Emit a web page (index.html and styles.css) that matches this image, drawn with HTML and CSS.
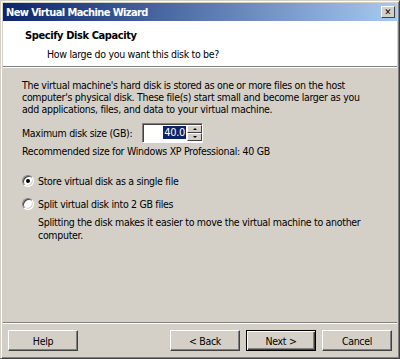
FILE: index.html
```html
<!DOCTYPE html>
<html>
<head>
    <meta charset="UTF-8">
    <title>New Virtual Machine Wizard</title>
    <link rel="stylesheet" href="styles.css">
</head>
<body>
    <div class="window">
        <div class="titlebar">
            <span class="title">New Virtual Machine Wizard</span>
            <span class="close">&#x2715;</span>
        </div>

        <div class="header">
            <div class="header-title">Specify Disk Capacity</div>
            <div class="header-sub">How large do you want this disk to be?</div>
        </div>

        <div class="content">
            <p class="intro">The virtual machine's hard disk is stored as one or more files on the host<br>
                computer's physical disk. These file(s) start small and become larger as you<br>
                add applications, files, and data to your virtual machine.</p>

            <div class="size-row">
                <span class="size-label">Maximum disk size (GB):</span>
                <div class="spin">
                    <div class="spin-field"><span class="sel">40.0</span></div>
                    <div class="spin-buttons">
                        <div class="spin-btn"><span class="arrow-up"></span></div>
                        <div class="spin-btn"><span class="arrow-down"></span></div>
                    </div>
                </div>
            </div>

            <p class="recommend">Recommended size for Windows XP Professional: 40 GB</p>

            <div class="radio-row first">
                <span class="radio checked"></span>
                <span>Store virtual disk as a single file</span>
            </div>
            <div class="radio-row">
                <span class="radio"></span>
                <span>Split virtual disk into 2 GB files</span>
            </div>
            <p class="split-note">Splitting the disk makes it easier to move the virtual machine to another<br>
                computer.</p>
        </div>

        <div class="footer">
            <button class="btn" type="button">Help</button>
            <div class="footer-right">
                <button class="btn" type="button">&lt; Back</button>
                <button class="btn default" type="button">Next &gt;</button>
                <button class="btn" type="button">Cancel</button>
            </div>
        </div>
    </div>
</body>
</html>
```

FILE: styles.css
```css
body {
    margin: 0;
    padding: 0;
    background-color: #d4d0c8;
    font-family: "DejaVu Sans Condensed", "Liberation Sans", sans-serif;
    font-size: 10.5px;
    letter-spacing: -0.3px;
    color: #000;
}

.window {
    width: 400px;
    height: 359px;
    box-sizing: border-box;
    background-color: #d4d0c8;
    border-top: 1px solid #d4d0c8;
    border-left: 1px solid #d4d0c8;
    border-right: 1px solid #404040;
    border-bottom: 1px solid #404040;
    box-shadow: inset 1px 1px 0 #fff, inset -1px -1px 0 #808080;
    padding: 2px;
    display: flex;
    flex-direction: column;
}

.titlebar {
    height: 18px;
    display: flex;
    align-items: center;
    justify-content: space-between;
    padding: 0 2px 0 3px;
    background: linear-gradient(to right, #0a246a, #a6caf0);
    flex-shrink: 0;
}

.title {
    color: #fff;
    font-weight: bold;
    font-size: 11px;
    letter-spacing: -0.6px;
}

.close {
    width: 14px;
    height: 12px;
    box-sizing: border-box;
    background-color: #d4d0c8;
    border-top: 1px solid #fff;
    border-left: 1px solid #fff;
    border-right: 1px solid #404040;
    border-bottom: 1px solid #404040;
    font-size: 9px;
    font-weight: bold;
    letter-spacing: 0;
    line-height: 10px;
    text-align: center;
}

.header {
    height: 46px;
    background-color: #fff;
    border-bottom: 1px solid #808080;
    box-shadow: 0 1px 0 #fff;
    padding: 8px 0 0 22px;
    box-sizing: border-box;
    flex-shrink: 0;
}

.header-title {
    font-weight: bold;
    font-size: 11px;
    letter-spacing: -0.4px;
    line-height: 14px;
}

.header-sub {
    margin-top: 5px;
    padding-left: 22px;
    line-height: 13px;
}

.content {
    flex: 1;
    padding: 12px 0 0 19px;
    white-space: nowrap;
}

p {
    margin: 0;
}

.intro {
    line-height: 12px;
}

.size-row {
    display: flex;
    align-items: center;
    margin-top: 8px;
}

.size-label {
    width: 120px;
}

.spin {
    display: flex;
    width: 61px;
    height: 20px;
    box-sizing: border-box;
    border-top: 1px solid #808080;
    border-left: 1px solid #808080;
    border-right: 1px solid #fff;
    border-bottom: 1px solid #fff;
    box-shadow: inset 1px 1px 0 #404040;
    background-color: #fff;
}

.spin-field {
    flex: 1;
    text-align: right;
    padding: 2px 1px 0 0;
    line-height: 14px;
    font-size: 11px;
}

.sel {
    background-color: #0a246a;
    color: #fff;
    padding: 0 1px;
}

.spin-buttons {
    width: 15px;
    display: flex;
    flex-direction: column;
    padding: 1px 0;
    box-sizing: border-box;
}

.spin-btn {
    flex: 1;
    background-color: #d4d0c8;
    border-top: 1px solid #fff;
    border-left: 1px solid #fff;
    border-right: 1px solid #404040;
    border-bottom: 1px solid #404040;
    display: flex;
    align-items: center;
    justify-content: center;
}

.arrow-up {
    width: 0;
    height: 0;
    border-left: 2px solid transparent;
    border-right: 2px solid transparent;
    border-bottom: 2px solid #000;
}

.arrow-down {
    width: 0;
    height: 0;
    border-left: 2px solid transparent;
    border-right: 2px solid transparent;
    border-top: 2px solid #000;
}

.recommend {
    margin-top: 2px;
    line-height: 13px;
}

.radio-row {
    display: flex;
    align-items: center;
    margin-top: 10px;
    height: 13px;
}

.radio-row.first {
    margin-top: 16px;
}

.radio {
    width: 12px;
    height: 12px;
    box-sizing: border-box;
    border-radius: 50%;
    border: 1px solid;
    border-color: #808080 #fff #fff #808080;
    box-shadow: inset 1px 1px 0 #404040, inset -1px -1px 0 #d4d0c8;
    background-color: #fff;
    margin: 0 4px 0 0;
    display: flex;
    align-items: center;
    justify-content: center;
}

.radio.checked::after {
    content: "";
    width: 4px;
    height: 4px;
    border-radius: 50%;
    background-color: #000;
}

.split-note {
    margin-top: 6px;
    padding-left: 16px;
    line-height: 13px;
}

.footer {
    height: 34px;
    flex-shrink: 0;
    border-top: 1px solid #808080;
    box-shadow: inset 0 1px 0 #fff;
    display: flex;
    justify-content: space-between;
    align-items: flex-start;
    padding: 7px 5px 0 5px;
    box-sizing: border-box;
}

.footer-right {
    display: flex;
    gap: 6px;
}

.btn {
    width: 70px;
    height: 21px;
    box-sizing: border-box;
    background-color: #d4d0c8;
    font-family: "DejaVu Sans Condensed", "Liberation Sans", sans-serif;
    font-size: 10.5px;
    letter-spacing: -0.3px;
    color: #000;
    border-top: 1px solid #fff;
    border-left: 1px solid #fff;
    border-right: 1px solid #404040;
    border-bottom: 1px solid #404040;
    box-shadow: inset -1px -1px 0 #808080;
    padding: 0;
}

.btn.default {
    border: 1px solid #000;
    box-shadow: inset 1px 1px 0 #fff, inset -1px -1px 0 #404040, inset -2px -2px 0 #808080;
}
```
